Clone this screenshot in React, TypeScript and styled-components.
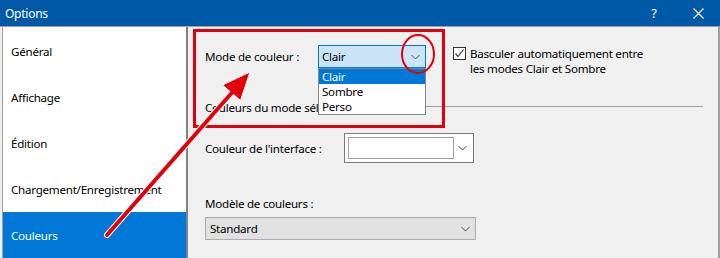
import React from "react";
import styled, { createGlobalStyle } from "styled-components";

const GlobalStyle = createGlobalStyle`
  html, body { margin: 0; padding: 0; background: #f0f0f0; }
  body {
    font-family: "Noto Sans", "Segoe UI", Arial, sans-serif;
    font-size: 11.6px;
    letter-spacing: -0.25px;
    color: #000;
  }
`;

const Window = styled.div`
  position: relative;
  width: 720px;
  height: 258px;
  overflow: hidden;
  background: #f0f0f0;
  display: flex;
  flex-direction: column;
`;

const TitleBar = styled.div`
  height: 26px;
  background: #0059a7;
  color: #fff;
  display: flex;
  align-items: center;
  padding-left: 5px;
  flex-shrink: 0;
`;

const Title = styled.div`
  flex: 1;
  font-size: 12px;
`;

const TitleButton = styled.div`
  width: 44px;
  height: 26px;
  display: flex;
  align-items: center;
  justify-content: center;
  font-size: 13px;
`;

const Body = styled.div`
  flex: 1;
  display: flex;
  border-top: 1px solid #a0a0a0;
  padding-left: 2px;
  border-right: 2px solid #a0a0a0;
`;

const Sidebar = styled.div`
  width: 183px;
  background: #fff;
  border-left: 1px solid #a0a0a0;
  border-right: 2px solid #828282;
  padding-top: 1px;
  display: flex;
  flex-direction: column;
`;

const NavItem = styled.div<{ $active?: boolean }>`
  height: 46px;
  display: flex;
  align-items: center;
  padding-left: 8px;
  background: ${(p) => (p.$active ? "#0078d7" : "transparent")};
  color: ${(p) => (p.$active ? "#fff" : "#000")};
`;

const Content = styled.div`
  flex: 1;
  padding: 18px 15px 0 17px;
  display: flex;
  flex-direction: column;
`;

const Row = styled.div<{ $gap?: number }>`
  display: flex;
  align-items: flex-start;
  margin-top: ${(p) => p.$gap ?? 0}px;
`;

const Label = styled.div<{ $w: number; $h: number }>`
  width: ${(p) => p.$w}px;
  height: ${(p) => p.$h}px;
  display: flex;
  align-items: center;
  flex-shrink: 0;
`;

const ComboWrap = styled.div`
  position: relative;
`;

const Combo = styled.div<{ $w: number; $focused?: boolean }>`
  width: ${(p) => p.$w}px;
  height: 23px;
  box-sizing: border-box;
  border: 1px solid ${(p) => (p.$focused ? "#0078d7" : "#adadad")};
  background: ${(p) => (p.$focused ? "#cce4f7" : "#e1e1e1")};
  display: flex;
  align-items: center;
  padding: 0 5px 0 3px;
`;

const ComboText = styled.div`
  flex: 1;
`;

const DropList = styled.div`
  position: absolute;
  left: 0;
  top: 23px;
  width: 108px;
  box-sizing: border-box;
  border: 1px solid #828790;
  background: #fff;
  z-index: 2;
`;

const DropItem = styled.div<{ $sel?: boolean }>`
  height: 15px;
  line-height: 15px;
  padding-left: 3px;
  background: ${(p) => (p.$sel ? "#0078d7" : "#fff")};
  color: ${(p) => (p.$sel ? "#fff" : "#000")};
`;

const CheckRow = styled.label`
  display: flex;
  align-items: flex-start;
  margin-left: 27px;
  margin-top: 1px;
  line-height: 15px;
`;

const CheckBox = styled.div`
  width: 13px;
  height: 13px;
  box-sizing: border-box;
  border: 1px solid #333;
  background: #fff;
  margin-right: 4px;
  margin-top: 1px;
  flex-shrink: 0;
  display: flex;
  align-items: center;
  justify-content: center;
`;

const GroupHeader = styled.div`
  display: flex;
  align-items: center;
  margin-top: 22px;
  height: 18px;
`;

const GroupLine = styled.div`
  flex: 1;
  height: 1px;
  background: #a0a0a0;
  margin-left: 6px;
  margin-bottom: 2px;
`;

const ColorCombo = styled.div`
  width: 130px;
  height: 30px;
  box-sizing: border-box;
  border: 1px solid #7a7a7a;
  background: #fff;
  display: flex;
  align-items: center;
  padding: 0 6px 0 3px;
`;

const Swatch = styled.div<{ $color: string }>`
  width: 106px;
  height: 22px;
  box-sizing: border-box;
  border: 1px solid #a0a0a0;
  background: ${(p) => p.$color};
  margin-right: auto;
`;

const SectionLabel = styled.div`
  margin-top: 31px;
  height: 18px;
  display: flex;
  align-items: center;
`;

const Select = styled(Combo)`
  margin-top: 5px;
  padding-left: 4px;
`;

const Overlay = styled.svg`
  position: absolute;
  left: 0;
  top: 0;
  pointer-events: none;
  z-index: 5;
`;

const RedBox = styled.div`
  position: absolute;
  left: 193px;
  top: 29px;
  width: 252px;
  height: 99px;
  box-sizing: border-box;
  border: 3px solid #e3000b;
  z-index: 4;
  pointer-events: none;
`;

const Chevron = () => (
  <svg width="9" height="6" viewBox="0 0 9 6">
    <path d="M0.5 1 L4.5 5 L8.5 1" fill="none" stroke="#555" strokeWidth="1" />
  </svg>
);

const CloseIcon = () => (
  <svg width="11" height="11" viewBox="0 0 11 11">
    <path d="M0.5 0.5 L10.5 10.5 M10.5 0.5 L0.5 10.5" stroke="#fff" strokeWidth="1.1" />
  </svg>
);

const CheckMark = () => (
  <svg width="11" height="11" viewBox="0 0 11 11">
    <path d="M1.5 5.5 L4 8.5 L9.5 1.5" fill="none" stroke="#444" strokeWidth="1.2" />
  </svg>
);

const navItems = ["Général", "Affichage", "Édition", "Chargement/Enregistrement", "Couleurs"];

export default function App() {
  return (
    <>
      <GlobalStyle />
      <Window>
        <TitleBar>
          <Title>Options</Title>
          <TitleButton>?</TitleButton>
          <TitleButton>
            <CloseIcon />
          </TitleButton>
        </TitleBar>
        <Body>
          <Sidebar>
            {navItems.map((n) => (
              <NavItem key={n} $active={n === "Couleurs"}>
                {n}
              </NavItem>
            ))}
          </Sidebar>
          <Content>
            <Row>
              <Label $w={113} $h={23}>Mode de couleur :</Label>
              <ComboWrap>
                <Combo $w={108} $focused>
                  <ComboText>Clair</ComboText>
                  <Chevron />
                </Combo>
                <DropList>
                  <DropItem $sel>Clair</DropItem>
                  <DropItem>Sombre</DropItem>
                  <DropItem>Perso</DropItem>
                </DropList>
              </ComboWrap>
              <CheckRow>
                <CheckBox>
                  <CheckMark />
                </CheckBox>
                <span>
                  Basculer automatiquement entre
                  <br />
                  les modes Clair et Sombre
                </span>
              </CheckRow>
            </Row>
            <GroupHeader>
              <span>Couleurs du mode sélectionné</span>
              <GroupLine />
            </GroupHeader>
            <Row $gap={17}>
              <Label $w={139} $h={30}>Couleur de l'interface :</Label>
              <ColorCombo>
                <Swatch $color="#ffffff" />
                <Chevron />
              </ColorCombo>
            </Row>
            <SectionLabel>Modèle de couleurs :</SectionLabel>
            <Select $w={271}>
              <ComboText>Standard</ComboText>
              <Chevron />
            </Select>
          </Content>
        </Body>
        <RedBox />
        <Overlay width="720" height="258" viewBox="0 0 720 258">
          <ellipse cx="418" cy="54" rx="16" ry="19" fill="none" stroke="#e3000b" strokeWidth="2" />
          <line x1="107" y1="235" x2="236" y2="88" stroke="#fff" strokeWidth="6" strokeLinecap="round" />
          <polygon points="250,72 240.5,100.5 222.5,85" fill="#e3000b" stroke="#fff" strokeWidth="1" strokeLinejoin="round" />
          <line x1="107" y1="235" x2="236" y2="88" stroke="#e3000b" strokeWidth="4" strokeLinecap="round" />
        </Overlay>
      </Window>
    </>
  );
}
